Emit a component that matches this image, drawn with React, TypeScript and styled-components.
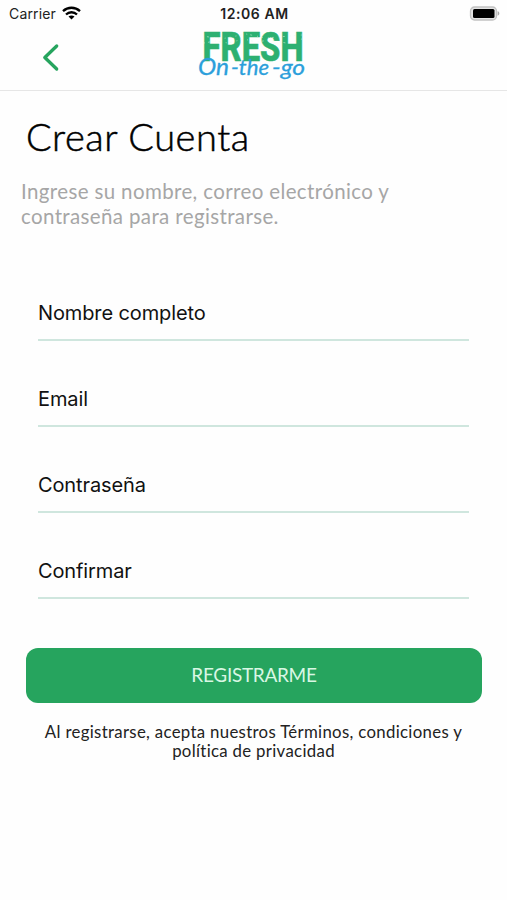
import React from 'react';
import styled, { createGlobalStyle } from 'styled-components';

const GlobalStyle = createGlobalStyle`
  * { box-sizing: border-box; }
  body { margin: 0; background: #fefefe; color: #111; }
`;

const Screen = styled.main`
  width: 507px;
  height: 900px;
  overflow: hidden;
  background: #fefefe;
  font-family: Lato, sans-serif;
`;

const Header = styled.header`
  height: 91px;
  border-bottom: 1px solid #e6e6e6;
`;

const StatusBar = styled.div`
  height: 27px;
  padding: 0 7px 0 9px;
  display: grid;
  grid-template-columns: 1fr auto 1fr;
  align-items: center;
  font-family: Inter, sans-serif;
`;

const Carrier = styled.div`
  display: flex;
  align-items: center;
  gap: 6px;
  font-size: 14px;
  letter-spacing: 0.15px;
  color: #222;
`;

const WifiIcon = styled.svg`
  margin-top: -1px;
`;

const Clock = styled.div`
  font-size: 14px;
  font-weight: 600;
  letter-spacing: 0.6px;
  color: #222;
`;

const BatteryIcon = styled.svg`
  justify-self: end;
`;

const NavBar = styled.nav`
  height: 63px;
  display: grid;
  grid-template-columns: 197px 112px 1fr;
`;

const BackButton = styled.button`
  width: 40px;
  height: 40px;
  margin: 10px 0 0 31px;
  padding: 0;
  border: 0;
  background: none;
`;

const LogoMark = styled.svg`
  overflow: visible;
`;

const Title = styled.h1`
  margin: 22px 0 0 26px;
  font-size: 38px;
  line-height: 46px;
  font-weight: 300;
  letter-spacing: 0.55px;
  color: #000;
  -webkit-text-stroke: 0.5px #000;
`;

const Intro = styled.p`
  margin: 20px 0 0 21px;
  font-size: 20.5px;
  line-height: 24.5px;
  letter-spacing: 0.37px;
  color: #a6a6a6;
`;

const Form = styled.form`
  margin-top: 52px;
  padding: 0 26px;
`;

const Field = styled.label`
  display: block;
  height: 61px;
  margin: 0 12px 25px;
  padding-top: 19px;
  border-bottom: 2px solid #cfe6de;
  font-family: Inter, sans-serif;
  font-size: 20px;
  line-height: 28px;
  letter-spacing: -0.12px;
`;

const Submit = styled.button`
  display: block;
  width: 456px;
  height: 55px;
  margin-top: 49px;
  padding: 0 0 2px;
  border: 0;
  border-radius: 12px;
  background: #26a45e;
  color: #d9f7e4;
  font-family: Lato, sans-serif;
  font-size: 19px;
  letter-spacing: -0.3px;
`;

const Terms = styled.p`
  margin: 19px 0 0;
  text-align: center;
  font-size: 16.8px;
  line-height: 19px;
  letter-spacing: 0.32px;
  color: #222;
`;

const fields = ['Nombre completo', 'Email', 'Contraseña', 'Confirmar'];

function Logo() {
  return (
    <LogoMark width="112" height="60" viewBox="197 27 112 60" aria-label="Fresh On-the-go">
      <text x="202.5" y="60.5" textLength="101" lengthAdjust="spacingAndGlyphs" fill="#2db071" stroke="#2db071" strokeWidth="0.6" fontFamily="Roboto, sans-serif" fontWeight="800" fontSize="41">FRESH</text>
      <g stroke="#e9faef" strokeWidth="0.7" strokeDasharray="1 3 2 5" opacity="0.7" fill="none">
        <path d="M204 43l11-2 13 2 16-4 12 3 14-2 16 3 16-4" />
        <path d="M203 36l18 3 25-5 20 4 36-3" />
      </g>
      <g fill="#2b9fdb" stroke="#2b9fdb" strokeWidth="0.3" fontFamily="Lato, sans-serif" fontStyle="italic" fontWeight="400">
        <text x="198" y="74.5" textLength="31" lengthAdjust="spacingAndGlyphs" fontSize="23">On</text>
        <text x="231" y="74.5" textLength="38" lengthAdjust="spacingAndGlyphs" fontSize="21">-the</text>
        <text x="272" y="74.5" textLength="33" lengthAdjust="spacingAndGlyphs" fontSize="21">-go</text>
      </g>
    </LogoMark>
  );
}

export default function App() {
  return (
    <Screen>
      <GlobalStyle />
      <Header>
        <StatusBar>
          <Carrier>
            Carrier
            <WifiIcon width="19" height="14" viewBox="0 0 19 14" fill="none" stroke="#000" strokeWidth="2.3">
              <path d="M1 5.2C5.9.6 13.1.6 18 5.2M4 8.5c3.1-3 7.9-3 11 0" />
              <path d="M9.5 13.5 6.5 10.6c1.8-1.5 4.2-1.5 6 0z" fill="#000" stroke="none" />
            </WifiIcon>
          </Carrier>
          <Clock>12:06 AM</Clock>
          <BatteryIcon width="31" height="15" viewBox="0 0 31 15">
            <rect x="1.5" y="1" width="26" height="13" rx="4" fill="#e4e4e4" stroke="#c2c2c2" strokeWidth="1.3" />
            <rect x="4" y="3" width="21.5" height="9" rx="1.5" fill="#000" />
            <path d="M28.6 5.3c2.3.6 2.3 3.8 0 4.4z" fill="#aaa" />
          </BatteryIcon>
        </StatusBar>
        <NavBar>
          <BackButton aria-label="Volver">
            <svg width="40" height="40" viewBox="0 0 40 40" fill="none" stroke="#26a45e" strokeWidth="3.3" strokeLinecap="round" strokeLinejoin="round">
              <path d="M25.7 9 13.8 20.5 25.7 32" />
            </svg>
          </BackButton>
          <Logo />
        </NavBar>
      </Header>
      <Title>Crear Cuenta</Title>
      <Intro>
        Ingrese su nombre, correo electrónico y<br />
        contraseña para registrarse.
      </Intro>
      <Form>
        {fields.map((label) => (
          <Field key={label}>{label}</Field>
        ))}
        <Submit type="button">REGISTRARME</Submit>
        <Terms>
          Al registrarse, acepta nuestros Términos, condiciones y<br />
          política de privacidad
        </Terms>
      </Form>
    </Screen>
  );
}
